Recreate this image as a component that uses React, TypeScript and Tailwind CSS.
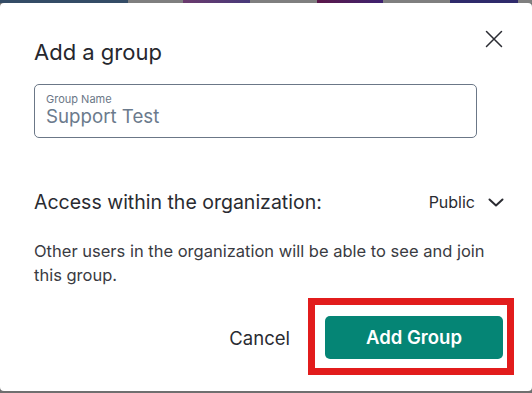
import { useState } from 'react';

const tiles = [
  { w: 'w-[128px]', cls: 'bg-[#344c66]' },
  { w: 'w-[55px]', cls: 'bg-[#7f7f7f]' },
  { w: 'w-[67px]', cls: 'bg-gradient-to-r from-[#6b3a6d] to-[#47397a]' },
  { w: 'w-[67px]', cls: 'bg-[#7f7f7f]' },
  { w: 'w-[66px]', cls: 'bg-gradient-to-r from-[#5b1549] to-[#3d2170]' },
  { w: 'w-[67px]', cls: 'bg-[#7f7f7f]' },
  { w: 'w-[68px]', cls: 'bg-[#2f2a6b]' },
];

export default function App() {
  const [name] = useState('Support Test');

  return (
    <div className="w-[532px] h-[393px] bg-[#6f6f6f] overflow-hidden font-['Inter',sans-serif]">
      {/* Dimmed page behind the modal */}
      <div className="flex h-[3px] bg-[#7f7f7f]">
        {tiles.map((t, i) => (
          <div key={i} className={`${t.w} h-full ${t.cls}`} />
        ))}
      </div>

      <div className="relative h-[388px] bg-white rounded-[4px] pt-[35px] pl-[34px] pr-[29px]">
        <h2 className="text-[22px] leading-[28px] font-normal text-[#26272e]">Add a group</h2>

        {/* Close */}
        <button className="absolute right-[29px] top-[27px] w-[18px] h-[18px] text-[#2b2c33]">
          <svg viewBox="0 0 18 18" width="18" height="18" fill="none" stroke="currentColor" strokeWidth="1.5" strokeLinecap="round">
            <path d="M1.5 1.5l15 15M16.5 1.5l-15 15" />
          </svg>
        </button>

        {/* Group name field */}
        <div className="mt-[18px] w-[443px] h-[54px] border border-[#6b7787] rounded-[5px] pl-[11px] pt-[7px]">
          <div className="text-[11px] leading-[14px] text-[#6b7787]">Group Name</div>
          <div className="text-[18.7px] leading-[22px] text-[#6b7a8c]">{name}</div>
        </div>

        {/* Access */}
        <div className="mt-[52px] flex items-center justify-between">
          <span className="text-[19.5px] leading-[24px] text-[#2a2b31]">Access within the organization:</span>
          <div className="flex items-center gap-[13px] text-[#2a2b31]">
            <span className="text-[16px] leading-[24px]">Public</span>
            <svg viewBox="0 0 16 9" width="16" height="9" fill="none" stroke="currentColor" strokeWidth="2" strokeLinecap="round" strokeLinejoin="round" className="mr-[-1px]">
              <path d="M1.5 1.5L8 7.5l6.5-6" />
            </svg>
          </div>
        </div>

        <p className="mt-[25px] text-[16.5px] leading-[24px] text-[#3a3b42]">
          Other users in the organization will be able to see and join this group.
        </p>

        {/* Actions */}
        <div className="mt-[29px] flex items-center justify-end gap-[35px]">
          <button className="text-[18.5px] leading-[24px] text-[#2a2b31]">Cancel</button>
          <div className="relative">
            <button className="w-[178px] h-[43px] rounded-[5px] bg-[#058575] text-white text-[18.5px] font-semibold">
              Add Group
            </button>
            {/* Highlight annotation */}
            <div className="absolute left-[-17px] top-[-18px] right-[-11px] bottom-[-16px] border-[7px] border-[#e21c1c] pointer-events-none" />
          </div>
        </div>
      </div>
    </div>
  );
}
